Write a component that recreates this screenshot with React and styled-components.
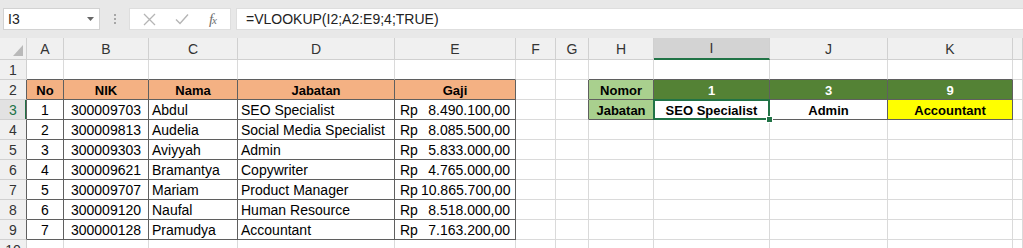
import React from 'react';
import styled, { createGlobalStyle, css } from 'styled-components';

const GlobalStyle = createGlobalStyle`
  html, body {
    margin: 0;
    padding: 0;
    background: #ffffff;
    overflow: hidden;
  }
  body {
    font-family: "Liberation Sans", Arial, sans-serif;
  }
`;

const GRID = '#dadada';
const DARK = '#5f5f5f';
const EXCEL_GREEN = '#217346';

// 전체 창
const Window = styled.div`
  width: 1023px;
  height: 248px;
  overflow: hidden;
  background: #ffffff;
`;

// 수식 입력줄
const FormulaBar = styled.div`
  display: flex;
  align-items: flex-start;
  height: 38px;
  box-sizing: border-box;
  padding: 8px 0 0 3px;
  background: #e8e8e8;
`;

const NameBox = styled.div`
  width: 97px;
  height: 22px;
  box-sizing: border-box;
  display: flex;
  align-items: center;
  justify-content: space-between;
  padding: 0 5px 0 4px;
  background: #ffffff;
  border: 1px solid #d2d2d2;
  font-size: 14px;
  color: #222;
`;

const Dots = styled.div`
  display: flex;
  flex-direction: column;
  gap: 2px;
  margin: 6px 0 0 14px;
  & > span {
    width: 2px;
    height: 2px;
    background: #a6a6a6;
  }
`;

const EditBox = styled.div`
  width: 102px;
  height: 22px;
  margin-left: 13px;
  box-sizing: border-box;
  display: flex;
  align-items: center;
  justify-content: space-between;
  padding: 0 14px 0 13px;
  background: #ffffff;
  border: 1px solid #dedede;
`;

const Fx = styled.span`
  font-family: "Liberation Serif", "Times New Roman", serif;
  font-style: italic;
  font-size: 15px;
  color: #6f6f6f;
  letter-spacing: -1px;
  & > small {
    font-size: 11px;
  }
`;

const FormulaInput = styled.div`
  flex: 1;
  height: 22px;
  margin-left: 5px;
  box-sizing: border-box;
  display: flex;
  align-items: center;
  padding-left: 9px;
  background: #ffffff;
  border: 1px solid #dedede;
  border-right: none;
  font-size: 14px;
  color: #222;
`;

// 시트 그리드
const Sheet = styled.div`
  display: grid;
  grid-template-columns: 27px 37px 85px 89px 157px 121px 40px 33px 65px 116px 118px 125px 1fr;
  grid-template-rows: 22px repeat(10, 20px);
`;

const Corner = styled.div`
  display: flex;
  align-items: flex-end;
  justify-content: flex-end;
  padding: 0 3px 3px 0;
  background: #f0f0f0;
  border-right: 1px solid #d0d0d0;
  border-bottom: 1px solid #d0d0d0;
`;

const ColHeader = styled.div`
  display: flex;
  align-items: center;
  justify-content: center;
  box-sizing: border-box;
  background: ${p => (p.$active ? '#d3d3d3' : '#f0f0f0')};
  border-right: 1px solid #d0d0d0;
  border-bottom: 1px solid #d0d0d0;
  font-size: 14px;
  color: #333;
  ${p => p.$active && css`
    border-bottom: 2px solid ${EXCEL_GREEN};
  `}
`;

const RowHeader = styled.div`
  display: flex;
  align-items: center;
  justify-content: center;
  box-sizing: border-box;
  background: ${p => (p.$active ? '#e2e2e2' : '#f0f0f0')};
  border-right: 1px solid ${p => p.$edge};
  border-bottom: 1px solid #d0d0d0;
  font-size: 14px;
  color: ${p => (p.$active ? EXCEL_GREEN : '#333')};
  padding-top: 1px;
  ${p => p.$active && css`
    box-shadow: inset -1px 0 0 ${EXCEL_GREEN};
  `}
`;

const Cell = styled.div`
  position: relative;
  display: flex;
  align-items: center;
  justify-content: ${p => p.$align};
  box-sizing: border-box;
  padding: 1px 3px 0;
  background: ${p => p.$bg || '#ffffff'};
  color: ${p => p.$color || '#000'};
  border-right: 1px solid ${p => p.$rb};
  border-bottom: 1px solid ${p => p.$bb};
  font-size: ${p => (p.$bold ? '13px' : '14px')};
  font-weight: ${p => (p.$bold ? 700 : 400)};
  white-space: nowrap;
  ${p => p.$selected && css`
    &::after {
      content: '';
      position: absolute;
      top: -1px;
      left: -1px;
      right: -1px;
      bottom: -1px;
      border: 2px solid ${EXCEL_GREEN};
      pointer-events: none;
    }
    &::before {
      content: '';
      position: absolute;
      right: -4px;
      bottom: -4px;
      width: 5px;
      height: 5px;
      background: ${EXCEL_GREEN};
      border: 1px solid #ffffff;
      z-index: 2;
    }
  `}
`;

const Money = styled.span`
  display: flex;
  justify-content: space-between;
  gap: 3px;
  width: 100%;
  padding: 0 2px 0 2px;
`;

const COLS = ['A', 'B', 'C', 'D', 'E', 'F', 'G', 'H', 'I', 'J', 'K', 'L'];

const employees = [
  ['1', '300009703', 'Abdul', 'SEO Specialist', '8.490.100,00'],
  ['2', '300009813', 'Audelia', 'Social Media Specialist', '8.085.500,00'],
  ['3', '300009303', 'Aviyyah', 'Admin', '5.833.000,00'],
  ['4', '300009621', 'Bramantya', 'Copywriter', '4.765.000,00'],
  ['5', '300009707', 'Mariam', 'Product Manager', '10.865.700,00'],
  ['6', '300009120', 'Naufal', 'Human Resource', '8.518.000,00'],
  ['7', '300000128', 'Pramudya', 'Accountant', '7.163.200,00'],
];

// 셀 데이터 만들기
function buildCells() {
  const cells = {};
  const set = (r, c, props) => { cells[`${r}-${c}`] = props; };

  const head = { $bg: '#f4b183', $bold: true, $align: 'center' };
  ['No', 'NIK', 'Nama', 'Jabatan', 'Gaji'].forEach((t, i) => set(2, i + 1, { ...head, text: t }));

  employees.forEach((e, i) => {
    const r = i + 3;
    set(r, 1, { text: e[0], $align: 'center' });
    set(r, 2, { text: e[1], $align: 'center' });
    set(r, 3, { text: e[2], $align: 'flex-start' });
    set(r, 4, { text: e[3], $align: 'flex-start' });
    set(r, 5, { money: e[4], $align: 'flex-start' });
  });

  const label = { $bg: '#a9d08e', $bold: true, $align: 'center' };
  set(2, 8, { ...label, text: 'Nomor' });
  set(3, 8, { ...label, text: 'Jabatan' });

  const dark = { $bg: '#548235', $color: '#ffffff', $bold: true, $align: 'center' };
  set(2, 9, { ...dark, text: '1' });
  set(2, 10, { ...dark, text: '3' });
  set(2, 11, { ...dark, text: '9' });

  set(3, 9, { text: 'SEO Specialist', $bold: true, $align: 'center', $selected: true });
  set(3, 10, { text: 'Admin', $bold: true, $align: 'center' });
  set(3, 11, { text: 'Accountant', $bold: true, $align: 'center', $bg: '#ffff00' });

  return cells;
}

const inTable = (r, c) =>
  (r >= 2 && r <= 9 && c >= 1 && c <= 5) || (r >= 2 && r <= 3 && c >= 8 && c <= 11);

function App() {
  const cells = buildCells();
  const rows = Array.from({ length: 10 }, (_, i) => i + 1);

  return (
    <Window>
      <GlobalStyle />
      <FormulaBar>
        <NameBox>
          <span>I3</span>
          <svg width="7" height="4" viewBox="0 0 7 4">
            <path d="M0 0 L7 0 L3.5 4 Z" fill="#666" />
          </svg>
        </NameBox>
        <Dots><span /><span /><span /></Dots>
        <EditBox>
          <svg width="13" height="13" viewBox="0 0 13 13">
            <path d="M1 1 L12 12 M12 1 L1 12" stroke="#b5b5b5" strokeWidth="1.3" />
          </svg>
          <svg width="14" height="12" viewBox="0 0 14 12">
            <path d="M1 6.5 L5 10.5 L13 1.5" stroke="#b5b5b5" strokeWidth="1.4" fill="none" />
          </svg>
          <Fx>f<small>x</small></Fx>
        </EditBox>
        <FormulaInput>=VLOOKUP(I2;A2:E9;4;TRUE)</FormulaInput>
      </FormulaBar>

      <Sheet>
        <Corner>
          <svg width="10" height="11" viewBox="0 0 10 11">
            <path d="M10 0 L10 11 L0 11 Z" fill="#b9b9b9" />
          </svg>
        </Corner>
        {COLS.map(c => (
          <ColHeader key={c} $active={c === 'I'}>{c === 'L' ? '' : c}</ColHeader>
        ))}

        {rows.map(r => (
          <React.Fragment key={r}>
            <RowHeader $active={r === 3} $edge={r >= 2 && r <= 9 ? DARK : '#d0d0d0'}>{r}</RowHeader>
            {COLS.map((_, idx) => {
              const c = idx + 1;
              const cell = cells[`${r}-${c}`] || { $align: 'flex-start' };
              const rb = inTable(r, c) || inTable(r, c + 1) ? DARK : GRID;
              const bb = inTable(r, c) || inTable(r + 1, c) ? DARK : GRID;
              const { text, money, ...style } = cell;
              return (
                <Cell key={c} {...style} $rb={rb} $bb={bb}>
                  {money ? (
                    <Money><span>Rp</span><span>{money}</span></Money>
                  ) : text}
                </Cell>
              );
            })}
          </React.Fragment>
        ))}
      </Sheet>
    </Window>
  );
}

export default App;
